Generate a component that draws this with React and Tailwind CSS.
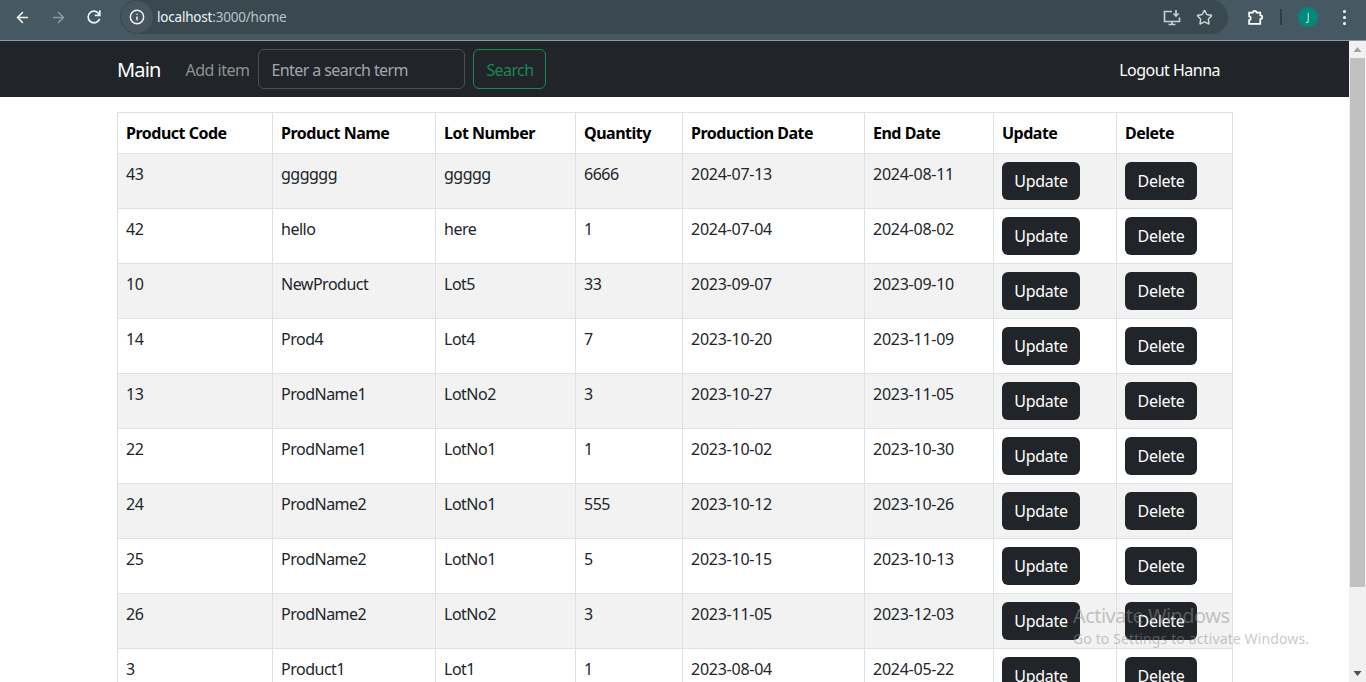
import React from "react";
import { ArrowLeft, ArrowRight, Info, Star } from "lucide-react";

const rows = [
  ["43", "gggggg", "ggggg", "6666", "2024-07-13", "2024-08-11"],
  ["42", "hello", "here", "1", "2024-07-04", "2024-08-02"],
  ["10", "NewProduct", "Lot5", "33", "2023-09-07", "2023-09-10"],
  ["14", "Prod4", "Lot4", "7", "2023-10-20", "2023-11-09"],
  ["13", "ProdName1", "LotNo2", "3", "2023-10-27", "2023-11-05"],
  ["22", "ProdName1", "LotNo1", "1", "2023-10-02", "2023-10-30"],
  ["24", "ProdName2", "LotNo1", "555", "2023-10-12", "2023-10-26"],
  ["25", "ProdName2", "LotNo1", "5", "2023-10-15", "2023-10-13"],
  ["26", "ProdName2", "LotNo2", "3", "2023-11-05", "2023-12-03"],
  ["3", "Product1", "Lot1", "1", "2023-08-04", "2024-05-22"],
];

const headers = [
  ["Product Code", "w-[155px]"],
  ["Product Name", "w-[163px]"],
  ["Lot Number", "w-[140px]"],
  ["Quantity", "w-[107px]"],
  ["Production Date", "w-[182px]"],
  ["End Date", "w-[129px]"],
  ["Update", "w-[123px]"],
  ["Delete", "w-[116px]"],
];

const font = "font-['Noto_Sans',sans-serif]";

function Btn({ children, w }) {
  return (
    <button className={`h-[38px] ${w} rounded-md bg-[#212529] text-white text-[16px] tracking-[-0.3px] block`}>
      {children}
    </button>
  );
}

export default function App() {
  return (
    <div className={`h-[682px] w-[1366px] overflow-hidden relative flex flex-col bg-white text-[#212529] ${font}`}>
      <div className="h-[41px] shrink-0 flex items-start bg-[#465963] border-b border-[#8a9aa3] text-white">
        <div className="h-[34px] flex items-center">
          <ArrowLeft size={17} strokeWidth={2.2} className="ml-[14px] text-[#f2f5f6]" />
          <ArrowRight size={17} strokeWidth={2.2} className="ml-[19px] text-[#8c9aa2]" />
          <svg width="20" height="20" viewBox="0 0 24 24" className="ml-[17px]" fill="#f2f5f6">
            <path d="M12 20q-3.35 0-5.675-2.325Q4 15.35 4 12q0-3.35 2.325-5.675Q8.65 4 12 4q1.725 0 3.3.713 1.575.712 2.7 2.037V4h2v7h-7V9h4.2q-.8-1.4-2.187-2.2Q13.625 6 12 6 9.5 6 7.75 7.75T6 12q0 2.5 1.75 4.25T12 18q1.925 0 3.475-1.1T17.65 14h2.1q-.7 2.65-2.85 4.325Q14.75 20 12 20Z" />
          </svg>
        </div>
        <div className="ml-[16px] w-[1108px] h-[34px] rounded-[17px] bg-[#3a4850] flex items-center">
          <div className="ml-[1px] w-[32px] h-[32px] rounded-full bg-[#46555e] flex items-center justify-center">
            <Info size={16} strokeWidth={2.2} className="text-[#f0f3f4]" />
          </div>
          <div className="ml-[4px] text-[13.5px] tracking-[-0.2px]">
            <span className="text-[#f1f4f5]">localhost</span>
            <span className="text-[#b9c3c8]">:3000/home</span>
          </div>
          <svg width="18" height="17" viewBox="0 0 18 17" fill="none" stroke="#c5ced2" strokeWidth="1.7" className="ml-auto">
            <path d="M9 2.5H1.5V12.5H16.5V8.5" />
            <path d="M5.5 15.5H12.5M9 12.5V15.5" />
            <path d="M13 1V7M10.5 4.5L13 7L15.5 4.5" />
          </svg>
          <Star size={17} strokeWidth={2} className="ml-[15px] mr-[15px] text-[#d0d8dc]" />
        </div>
        <div className="h-[34px] flex items-center">
          <svg width="17" height="17" viewBox="0 0 16 16" fill="none" stroke="white" strokeWidth="1.6" className="ml-[19px]">
            <path d="M2 3.5H5.5C5.5 1.3 9 1.3 9 3.5H12.5V6C15 6 15 9.5 12.5 9.5V14H2V10.5C4 10.5 4 7 2 7Z" />
          </svg>
          <div className="ml-[16px] w-[2px] h-[16px] bg-[#2f3d45]" />
          <div className="ml-[16px] w-[20px] h-[20px] rounded-full bg-[#00897b] text-[10px] flex items-center justify-center text-[#d8efec]">J</div>
          <div className="ml-[25px] flex flex-col gap-[3px]">
            <span className="w-[3px] h-[3px] rounded-full bg-white" />
            <span className="w-[3px] h-[3px] rounded-full bg-white" />
            <span className="w-[3px] h-[3px] rounded-full bg-white" />
          </div>
        </div>
      </div>

      <div className="flex flex-1 min-h-0">
        <div className="w-[1349px] shrink-0 overflow-hidden">
          <nav className="h-[56px] bg-[#212529] flex items-center pl-[117px] pr-[129px]">
            <span className="pt-[2px] text-[20px] tracking-[-0.85px] text-white">Main</span>
            <span className="pt-[2px] ml-[25px] text-[16px] tracking-[-0.5px] text-[#8e9194]">Add item</span>
            <div className="ml-[9px] w-[207px] h-[40px] rounded-md border border-[#495057] bg-[#212529] flex items-center pl-[12px] pt-[2px] text-[16px] tracking-[-0.58px] text-[#a3a7aa]">
              Enter a search term
            </div>
            <div className="ml-[8px] w-[73px] h-[40px] rounded-md border border-[#198754] flex items-center justify-center pt-[2px] text-[16px] tracking-[-0.6px] text-[#198754]">
              Search
            </div>
            <span className="pt-[2px] ml-auto text-[16px] tracking-[-0.52px] text-white">Logout Hanna</span>
          </nav>
          <div className="pt-[15px] pl-[117px]">
            <table className="table-fixed w-[1115px] border-collapse text-[16px] tracking-[-0.5px]">
              <thead>
                <tr className="h-[41px]">
                  {headers.map(([h, w]) => (
                    <th key={h} className={`${w} border border-[#dee2e6] px-2 text-left font-bold text-black`}>{h}</th>
                  ))}
                </tr>
              </thead>
              <tbody>
                {rows.map((r, i) => (
                  <tr key={i} className={`h-[55px] ${i % 2 === 0 ? "bg-[#f2f2f2]" : "bg-white"}`}>
                    {r.map((c, j) => (
                      <td key={j} className={`border border-[#dee2e6] px-2 pt-2 align-top leading-6 ${j >= 4 ? "tracking-[-0.25px]" : ""}`}>{c}</td>
                    ))}
                    <td className="border border-[#dee2e6] px-2 align-middle"><Btn w="w-[78px]">Update</Btn></td>
                    <td className="border border-[#dee2e6] px-2 align-middle"><Btn w="w-[72px]">Delete</Btn></td>
                  </tr>
                ))}
              </tbody>
            </table>
          </div>
        </div>
        <div className="w-[17px] shrink-0 bg-[#f1f1f1] flex flex-col items-center">
          <svg width="17" height="17" viewBox="0 0 17 17"><path d="M8.5 6 L12.5 11 H4.5 Z" fill="#a3a3a3" /></svg>
          <div className="w-[15px] h-[529px] bg-[#c1c1c1]" />
          <svg width="17" height="17" viewBox="0 0 17 17" className="mt-auto"><path d="M8.5 11 L12.5 6 H4.5 Z" fill="#505050" /></svg>
        </div>
      </div>

      <div className="absolute left-[1073px] top-[602px] pointer-events-none text-[#8f8f8f]/50">
        <div className="text-[20px] leading-[27px] tracking-[-0.55px]">Activate Windows</div>
        <div className="text-[14px] leading-[19px] tracking-[0.12px] whitespace-nowrap">Go to Settings to activate Windows.</div>
      </div>
    </div>
  );
}
